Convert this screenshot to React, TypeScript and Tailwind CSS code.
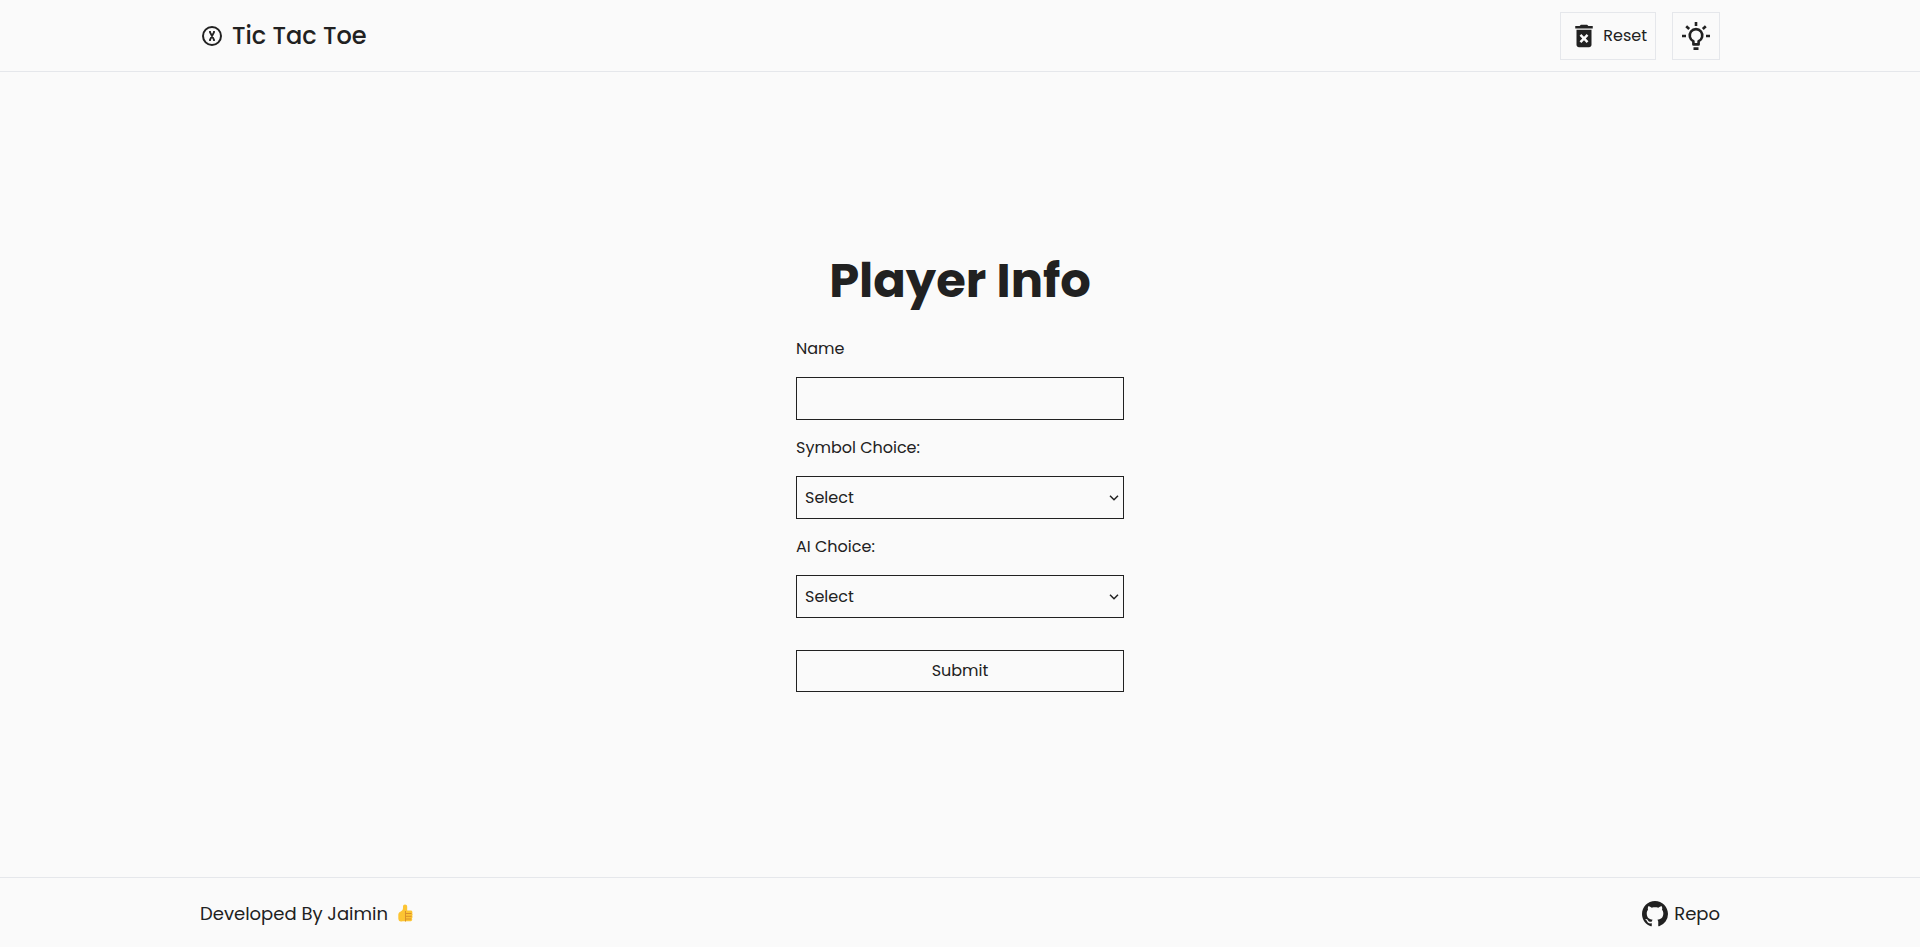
import { MdDeleteForever } from "react-icons/md";
import { BsGithub } from "react-icons/bs";

const field = "h-[43px] w-full border border-[#212121] bg-transparent outline-none";

function LogoIcon() {
  return (
    <svg aria-hidden="true" viewBox="0 0 24 24" className="size-6" fill="none" stroke="currentColor" strokeWidth="2">
      <circle cx="12" cy="12" r="9" />
      <path d="M10 7v1.200l4 7.600V17M14 7v1.200l-4 7.600V17" strokeWidth="1.800" />
    </svg>
  );
}

function BulbIcon() {
  return (
    <svg aria-hidden="true" viewBox="0 0 30 30" className="size-[30px]" fill="none" stroke="currentColor" strokeWidth="2.6">
      <path d="M15 1v4M1 15h4M25 15h4M5.2 5.2l3 2.8M24.8 5.2l-3 2.8M12.5 27.6h5" />
      <path d="M12.4 23.4v-3.2a6.3 6.3 0 1 1 5.2 0v3.2z" strokeLinejoin="round" />
    </svg>
  );
}

function ThumbIcon() {
  return (
    <svg role="img" aria-label="Thumbs up" viewBox="0 0 15 19" className="h-[19px] w-[15px]">
      <path
        fill="#fcc433"
        d="M5 2.500C5 1.200 5.800.5 7 .5s2.200.8 2.200 2.200V6.500h3.400c1.100 0 1.800.7 1.800 1.700 0 .5-.1.800-.3 1.100.3.300.5.700.5 1.200s-.2.900-.5 1.200c.3.300.4.700.4 1.200 0 .6-.2 1-.6 1.300.2.300.3.600.3 1 0 1.300-.8 2.100-2.200 2.100H4.500C2 18.300.3 16.800.3 14.300V11c0-1.500.7-2.700 2-3.300C4 6.900 5 5.800 5 4z"
      />
      <path fill="none" stroke="#d9902a" strokeWidth="1" d="M7.500 7v10.500M7.500 9.500h6M7.500 12.300h6M7.500 15h5.500" />
    </svg>
  );
}

function Choice({ id, label, options }: { id: string; label: string; options: string[] }) {
  return (
    <>
      <label htmlFor={id}>{label}</label>
      <div className="relative">
        <select id={id} defaultValue="" className={field + " block appearance-none px-2"}>
          <option value="">Select</option>
          {options.map((o) => (
            <option key={o}>{o}</option>
          ))}
        </select>
        <svg aria-hidden="true" viewBox="0 0 10 6" className="pointer-events-none absolute top-[19px] right-[5px] h-[6px] w-[10px]" fill="none" stroke="currentColor" strokeWidth="1.5">
          <path d="M1 .7l4 4 4-4" />
        </svg>
      </div>
    </>
  );
}

export default function App() {
  return (
    <div className="flex min-h-[calc(100vh-2px)] flex-col bg-[#fafafa] font-[Poppins,Inter,sans-serif] text-base text-[#212121]">
      <header className="border-b border-gray-200">
        <div className="mx-auto flex h-[71px] max-w-[1552px] items-center justify-between px-4">
          <a href="#" className="flex items-center gap-2 text-2xl font-medium">
            <LogoIcon />
            <span>Tic Tac Toe</span>
          </a>
          <div className="flex gap-4">
            <button type="button" className="flex h-12 items-center gap-1 border border-gray-200 px-2">
              <MdDeleteForever aria-hidden="true" className="size-[30px]" />
              Reset
            </button>
            <button type="button" aria-label="Toggle theme" className="flex size-12 items-center justify-center border border-gray-200">
              <BulbIcon />
            </button>
          </div>
        </div>
      </header>

      <main className="flex grow flex-col items-center justify-center">
        <form className="flex w-[328px] flex-col gap-4">
          <h1 className="mb-4 text-center text-5xl leading-none font-bold">Player Info</h1>
          <label htmlFor="name">Name</label>
          <input id="name" type="text" className={field + " px-2"} />
          <Choice id="symbol" label="Symbol Choice:" options={["X", "O"]} />
          <Choice id="ai" label="AI Choice:" options={["Easy", "Hard"]} />
          <button type="submit" className="mt-4 h-[42px] border border-[#212121]">
            Submit
          </button>
        </form>
      </main>

      <footer className="border-t border-gray-200">
        <div className="mx-auto flex h-[69px] max-w-[1552px] items-center justify-between px-4 pt-[2px] text-lg">
          <p className="flex items-center gap-[10px]">
            Developed By Jaimin <ThumbIcon />
          </p>
          <a href="#" className="flex items-center gap-[6px]">
            <BsGithub aria-hidden="true" className="size-[26px]" />
            Repo
          </a>
        </div>
      </footer>
    </div>
  );
}
